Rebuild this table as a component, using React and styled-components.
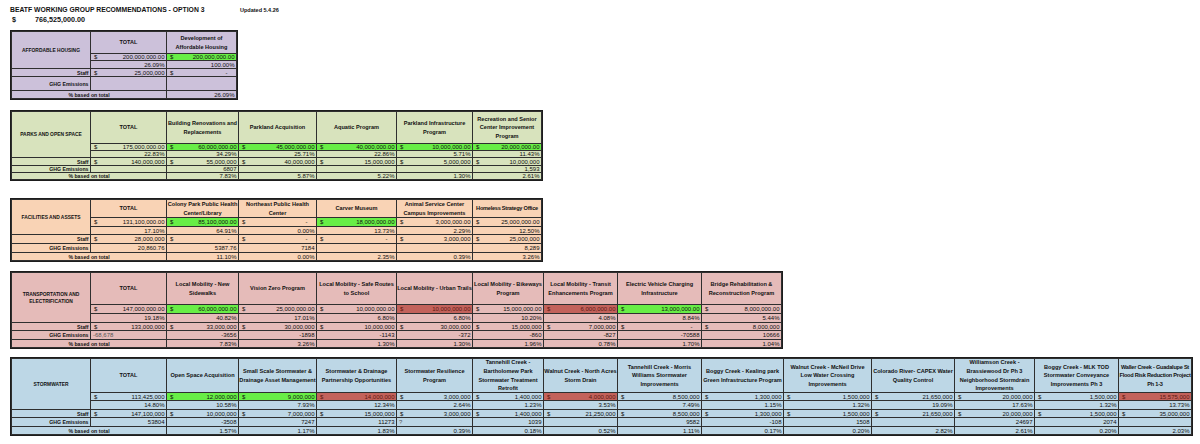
import React from "react";
import styled, { createGlobalStyle } from "styled-components";

const GlobalStyle = createGlobalStyle`
  html, body {
    margin: 0;
    padding: 0;
    background: #fff;
  }
  body {
    font-family: "Liberation Sans", Arial, sans-serif;
    color: #111;
  }
`;

// spreadsheet column edges, shared by every section
const EDGES = [10, 90, 166, 238, 316, 396, 472, 543, 617, 701, 783, 871, 954, 1034, 1118, 1193];

const FILLS = {
  green: "#68ee46",
  red: "#c3625b",
};

const colWidths = (n) =>
  Array.from({ length: n }, (_, i) => {
    let w = EDGES[i + 1] - EDGES[i] - 1;
    if (i === 0) w -= 1;
    if (i === n - 1) w -= 2;
    return `${w}px`;
  }).join(" ");

const rowHeights = (pitch) =>
  pitch
    .map((p, i) => {
      if (i === 0) return `${p - 3}px`;
      if (i === pitch.length - 1) return `${p - 2}px`;
      return `${p - 1}px`;
    })
    .join(" ");

const Page = styled.div`
  padding: 0 0 0 10px;
`;

const TitleRow = styled.div`
  display: flex;
  align-items: baseline;
  height: 10px;
  line-height: 10px;
  padding-top: 5px;
  font-weight: 700;
  white-space: nowrap;
`;

const Title = styled.div`
  width: 230px;
  font-size: 6.8px;
`;

const Updated = styled.div`
  font-size: 5.5px;
`;

const GrandTotal = styled.div`
  display: flex;
  height: 10px;
  line-height: 10px;
  font-size: 7.2px;
  font-weight: 700;
`;

const GrandDollar = styled.span`
  box-sizing: border-box;
  width: 25px;
  padding-left: 2px;
`;

const Sheet = styled.div`
  --fill: ${({ $bg }) => $bg};
  display: grid;
  width: fit-content;
  margin-top: ${({ $gap }) => $gap}px;
  grid-template-columns: ${({ $cols }) => $cols};
  grid-template-rows: ${({ $rows }) => $rows};
  gap: 1px;
  padding: 1px;
  border: 1px solid #1d1d1d;
  background: #2f2f2f;
`;

const Cell = styled.div`
  display: flex;
  align-items: center;
  justify-content: ${({ $align }) =>
    $align === "left" ? "flex-start" : $align === "center" ? "center" : "flex-end"};
  padding: 0 1.5px 0 2px;
  background: ${({ $fill }) => ($fill ? FILLS[$fill] : "var(--fill)")};
  color: ${({ $fill, $muted }) => ($fill === "red" ? "#5e1812" : $muted ? "#555" : "inherit")};
  font-size: 6px;
  line-height: 6px;
  white-space: nowrap;
  overflow: hidden;
`;

const MoneyCell = styled(Cell)`
  justify-content: space-between;
  padding-left: 3px;
`;

const Dash = styled.span`
  padding-right: 7px;
`;

const HeadCell = styled.div`
  display: flex;
  flex-direction: column;
  justify-content: center;
  align-items: center;
  background: var(--fill);
  font-size: ${({ $caps }) => ($caps ? 5.5 : 5.6)}px;
  font-weight: 700;
  line-height: 8.6px;
  letter-spacing: ${({ $tight }) => ($tight ? "-0.25px" : "normal")};
  overflow: hidden;
`;

const HeadLine = styled.span`
  white-space: nowrap;
`;

const SectionName = styled(HeadCell)`
  grid-row: span 3;
  font-size: 4.9px;
  line-height: 7px;
`;

const RowLabel = styled.div`
  display: flex;
  align-items: center;
  justify-content: ${({ $wide }) => ($wide ? "center" : "flex-end")};
  grid-column: ${({ $wide }) => ($wide ? "span 2" : "auto")};
  padding: 0 1.5px;
  background: var(--fill);
  font-size: 5.2px;
  font-weight: 700;
  white-space: nowrap;
`;

const G = (v) => ({ v, fill: "green" });
const R = (v) => ({ v, fill: "red" });
const L = (v) => ({ v, align: "left", muted: true });
const T = (...lines) => ({ lines, tight: true });
const norm = (x) => (typeof x === "string" ? { v: x } : x);
const normHead = (h) => (Array.isArray(h) ? { lines: h } : h);

const SECTIONS = [
  {
    name: ["AFFORDABLE HOUSING"],
    bg: "#ccc1da",
    gap: 5,
    pitch: [24, 7, 8, 8, 14, 9],
    heads: [["Development of", "Affordable Housing"]],
    money: ["200,000,000.00", G("200,000,000.00")],
    pct: ["26.09%", "100.00%"],
    staff: ["25,000,000", "-"],
    ghg: ["", ""],
    based: ["26.09%"],
  },
  {
    name: ["PARKS AND OPEN SPACE"],
    bg: "#d8e3bd",
    gap: 10,
    pitch: [34, 7, 7, 8, 7, 8],
    heads: [
      ["Building Renovations and", "Replacements"],
      ["Parkland Acquisition"],
      ["Aquatic Program"],
      ["Parkland Infrastructure", "Program"],
      ["Recreation and Senior", "Center Improvement", "Program"],
    ],
    money: [
      "175,000,000.00",
      G("60,000,000.00"),
      G("45,000,000.00"),
      G("40,000,000.00"),
      G("10,000,000.00"),
      G("20,000,000.00"),
    ],
    pct: ["22.83%", "34.29%", "25.71%", "22.86%", "5.71%", "11.43%"],
    staff: ["140,000,000", "55,000,000", "40,000,000", "15,000,000", "5,000,000", "10,000,000"],
    ghg: ["", "6807", "", "", "", "1,593"],
    based: ["7.83%", "5.87%", "5.22%", "1.30%", "2.61%"],
  },
  {
    name: ["FACILITIES AND ASSETS"],
    bg: "#f9d3b5",
    gap: 17,
    pitch: [20, 9, 8, 9, 9, 9],
    heads: [
      ["Colony Park Public Health", "Center/Library"],
      ["Northeast Public Health", "Center"],
      ["Carver Museum"],
      ["Animal Service Center", "Campus Improvements"],
      T("Homeless Strategy Office"),
    ],
    money: [
      "131,100,000.00",
      G("85,100,000.00"),
      "-",
      G("18,000,000.00"),
      "3,000,000.00",
      "25,000,000.00",
    ],
    pct: ["17.10%", "64.91%", "0.00%", "13.73%", "2.29%", "12.50%"],
    staff: ["28,000,000", "-", "-", "-", "3,000,000", "25,000,000"],
    ghg: ["20,860.76", "5387.76", "7184", "", "", "8,289"],
    based: ["11.10%", "0.00%", "2.35%", "0.39%", "3.26%"],
  },
  {
    name: ["TRANSPORTATION AND", "ELECTRIFICATION"],
    bg: "#e5bbb9",
    gap: 9,
    pitch: [34, 9, 9, 8, 9, 9],
    heads: [
      ["Local Mobility - New", "Sidewalks"],
      ["Vision Zero Program"],
      ["Local Mobility - Safe Routes", "to School"],
      ["Local Mobility - Urban Trails"],
      ["Local Mobility - Bikeways", "Program"],
      ["Local Mobility - Transit", "Enhancements Program"],
      ["Electric Vehicle Charging", "Infrastructure"],
      ["Bridge Rehabilitation &", "Reconstruction Program"],
    ],
    money: [
      "147,000,000.00",
      G("60,000,000.00"),
      "25,000,000.00",
      "10,000,000.00",
      R("10,000,000.00"),
      "15,000,000.00",
      R("6,000,000.00"),
      G("13,000,000.00"),
      "8,000,000.00",
    ],
    pct: ["19.18%", "40.82%", "17.01%", "6.80%", "6.80%", "10.20%", "4.08%", "8.84%", "5.44%"],
    staff: [
      "133,000,000",
      "33,000,000",
      "30,000,000",
      "10,000,000",
      "30,000,000",
      "15,000,000",
      "7,000,000",
      "-",
      "8,000,000",
    ],
    ghg: [L("-68,678"), "-3656", "-1898", "-1143", "-372", "-860", "-827", "-70588", "10666"],
    based: ["7.83%", "3.26%", "1.30%", "1.30%", "1.96%", "0.78%", "1.70%", "1.04%"],
  },
  {
    name: ["STORMWATER"],
    bg: "#bdd7e6",
    gap: 8,
    pitch: [36, 8, 9, 8, 9, 9],
    heads: [
      ["Open Space Acquisition"],
      ["Small Scale Stormwater &", "Drainage Asset Management"],
      ["Stormwater & Drainage", "Partnership Opportunities"],
      ["Stormwater Resilience", "Program"],
      ["Tannehill Creek -", "Bartholomew Park", "Stormwater Treatment", "Retrofit"],
      ["Walnut Creek - North Acres", "Storm Drain"],
      ["Tannehill Creek - Morris", "Williams Stormwater", "Improvements"],
      ["Boggy Creek - Kealing park", "Green Infrastructure Program"],
      ["Walnut Creek - McNeil Drive", "Low Water Crossing", "Improvements"],
      ["Colorado River- CAPEX Water", "Quality Control"],
      ["Williamson Creek -", "Brassiewood Dr Ph 3", "Neighborhood Stormdrain", "Improvements"],
      ["Boggy Creek - MLK TOD", "Stormwater Conveyance", "Improvements Ph 3"],
      T("Waller Creek - Guadalupe St", "Flood Risk Reduction Project", "Ph 1-3"),
    ],
    money: [
      "113,425,000",
      G("12,000,000"),
      G("9,000,000"),
      R("14,000,000"),
      "3,000,000",
      "1,400,000",
      R("4,000,000"),
      "8,500,000",
      "1,300,000",
      "1,500,000",
      "21,650,000",
      "20,000,000",
      "1,500,000",
      R("15,575,000"),
    ],
    pct: [
      "14.80%",
      "10.58%",
      "7.93%",
      "12.34%",
      "2.64%",
      "1.23%",
      "3.53%",
      "7.49%",
      "1.15%",
      "1.32%",
      "19.09%",
      "17.63%",
      "1.32%",
      "13.73%",
    ],
    staff: [
      "147,100,000",
      "10,000,000",
      "7,000,000",
      "15,000,000",
      "3,000,000",
      "1,400,000",
      "21,250,000",
      "8,500,000",
      "1,300,000",
      "1,500,000",
      "21,650,000",
      "20,000,000",
      "1,500,000",
      "35,000,000",
    ],
    ghg: ["53804", "-3508", "7247", "11273", L("?"), "1039", "", "9582", "-108", "1508", "", "24697", "2074", ""],
    based: [
      "1.57%",
      "1.17%",
      "1.83%",
      "0.39%",
      "0.18%",
      "0.52%",
      "1.11%",
      "0.17%",
      "0.20%",
      "2.82%",
      "2.61%",
      "0.20%",
      "2.03%",
    ],
  },
];

const Money = ({ item }) => {
  const { v, fill } = norm(item);
  return (
    <MoneyCell $fill={fill}>
      <span>$</span>
      {v === "-" ? <Dash>-</Dash> : <span>{v}</span>}
    </MoneyCell>
  );
};

const Plain = ({ item }) => {
  const { v, fill, align, muted } = norm(item);
  return (
    <Cell $fill={fill} $align={align} $muted={muted}>
      {v}
    </Cell>
  );
};

const Section = ({ data }) => {
  const n = data.heads.length + 2;
  return (
    <Sheet $gap={data.gap} $bg={data.bg} $cols={colWidths(n)} $rows={rowHeights(data.pitch)}>
      <SectionName>
        {data.name.map((line) => (
          <HeadLine key={line}>{line}</HeadLine>
        ))}
      </SectionName>
      <HeadCell $caps>
        <HeadLine>TOTAL</HeadLine>
      </HeadCell>
      {data.heads.map(normHead).map((h, i) => (
        <HeadCell key={i} $tight={h.tight}>
          {h.lines.map((line) => (
            <HeadLine key={line}>{line}</HeadLine>
          ))}
        </HeadCell>
      ))}

      {data.money.map((item, i) => (
        <Money key={`m${i}`} item={item} />
      ))}
      {data.pct.map((item, i) => (
        <Plain key={`p${i}`} item={item} />
      ))}

      <RowLabel>Staff</RowLabel>
      {data.staff.map((item, i) => (
        <Money key={`s${i}`} item={item} />
      ))}

      <RowLabel>GHG Emissions</RowLabel>
      {data.ghg.map((item, i) => (
        <Plain key={`g${i}`} item={item} />
      ))}

      <RowLabel $wide>% based on total</RowLabel>
      {data.based.map((item, i) => (
        <Plain key={`b${i}`} item={item} />
      ))}
    </Sheet>
  );
};

export default function App() {
  return (
    <>
      <GlobalStyle />
      <Page>
        <TitleRow>
          <Title>BEATF WORKING GROUP RECOMMENDATIONS - OPTION 3</Title>
          <Updated>Updated 5.4.26</Updated>
        </TitleRow>
        <GrandTotal>
          <GrandDollar>$</GrandDollar>
          <span>766,525,000.00</span>
        </GrandTotal>
        {SECTIONS.map((s) => (
          <Section key={s.name[0]} data={s} />
        ))}
      </Page>
    </>
  );
}
